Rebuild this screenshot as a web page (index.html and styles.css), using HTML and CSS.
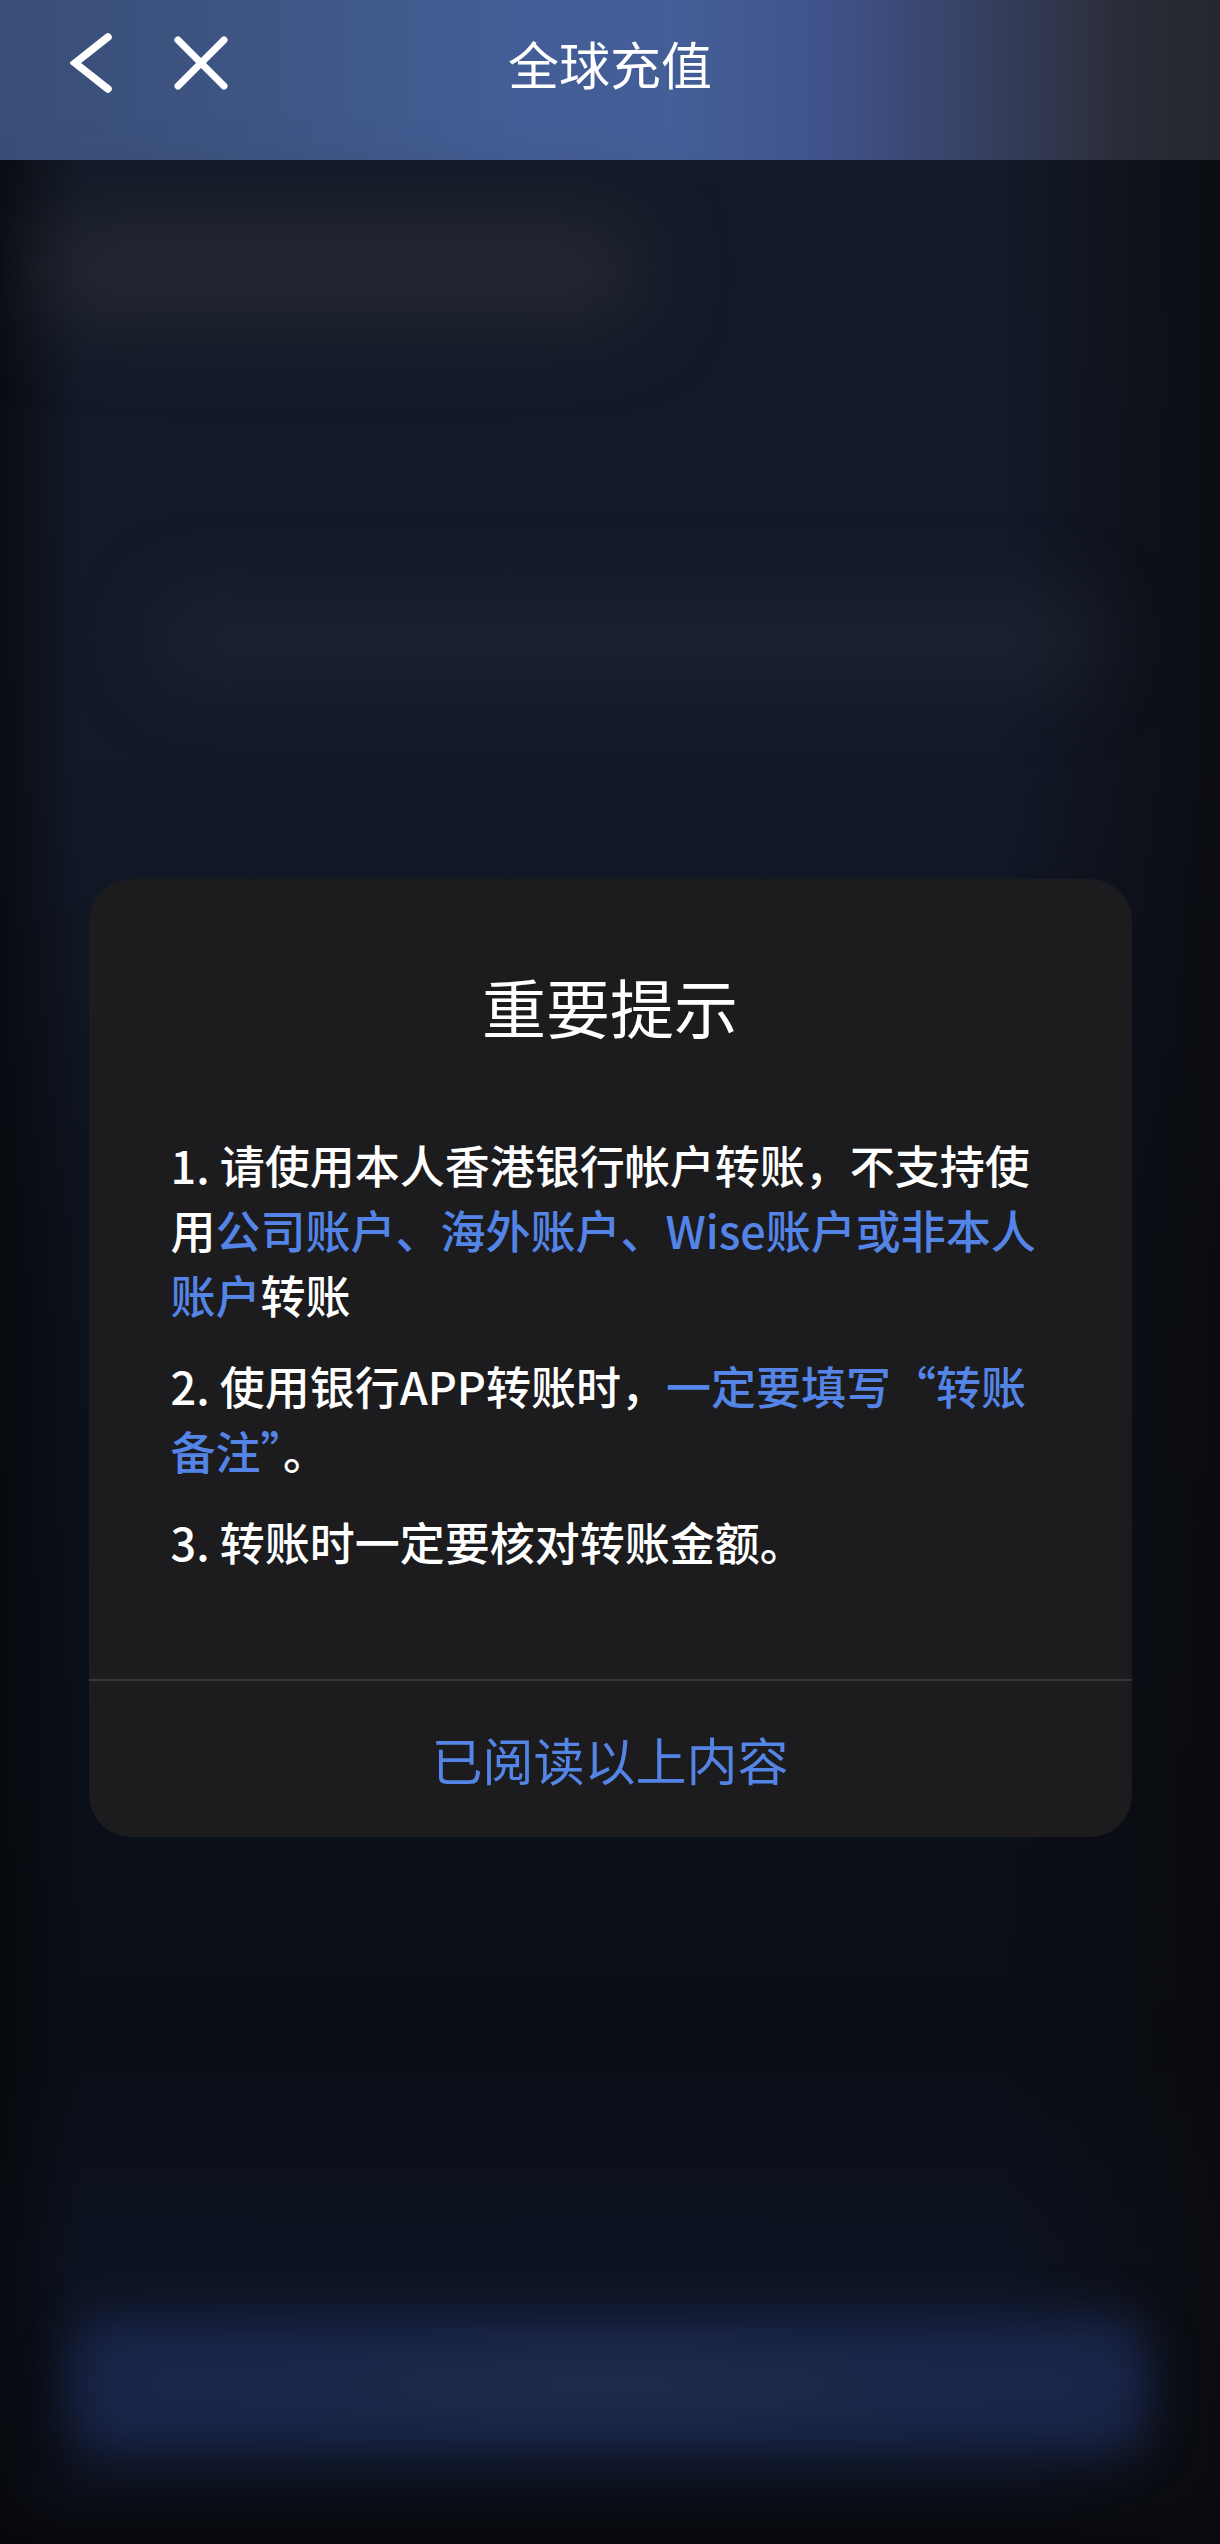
FILE: index.html
```html
<!DOCTYPE html>
<html lang="zh-CN">
<head>
  <meta charset="UTF-8">
  <title>全球充值</title>
  <link rel="stylesheet" href="styles.css">
</head>
<body>
  <div class="screen">
    <header class="topbar">
      <div class="topbar-left">
        <svg class="icon-back" width="44" height="64" viewBox="0 0 44 64">
          <polyline points="38,6 5,32 38,58" fill="none" stroke="#fff" stroke-width="7.5" stroke-linecap="round" stroke-linejoin="miter"/>
        </svg>
        <svg class="icon-close" width="56" height="56" viewBox="0 0 56 56">
          <path d="M5 5 L51 51 M51 5 L5 51" stroke="#fff" stroke-width="7" stroke-linecap="round"/>
        </svg>
      </div>
      <div class="topbar-title">全球充值</div>
      <div></div>
    </header>

    <main class="backdrop">
      <!-- contenu flouté derrière la modale -->
      <div class="ghost ghost-top"></div>
      <div class="ghost ghost-mid"></div>

      <!-- Modale -->
      <div class="notice">
        <div class="notice-body">
          <h2 class="notice-title">重要提示</h2>
          <p class="notice-item">1. 请使用本人香港银行帐户转账，不支持使用<span class="hl">公司账户、海外账户、Wise账户或非本人账户</span>转账</p>
          <p class="notice-item">2. 使用银行APP转账时，<span class="hl">一定要填写“转账备注”</span>。</p>
          <p class="notice-item">3. 转账时一定要核对转账金额。</p>
        </div>
        <div class="notice-action">已阅读以上内容</div>
      </div>

      <div class="ghost ghost-bottom"></div>
    </main>
  </div>
</body>
</html>
```

FILE: styles.css
```css
html, body {
  margin: 0;
  padding: 0;
}
body {
  font-family: "Noto Sans CJK SC", "Noto Sans", sans-serif;
  background: #0a0e17;
  color: #fff;
}
.screen {
  width: 1220px;
  min-height: 2544px;
  display: flex;
  flex-direction: column;
  overflow: hidden;
}

/* Barre du haut */
.topbar {
  height: 160px;
  box-sizing: border-box;
  padding: 0 0 34px 0;
  display: grid;
  grid-template-columns: 1fr auto 1fr;
  align-items: center;
  background: linear-gradient(90deg, #394e77 0%, #3e5685 22%, #435e96 42%, #445e97 55%, #3f5389 68%, #353d5c 82%, #2a2d38 92%, #25272d 100%);
}
.topbar-left {
  display: flex;
  align-items: center;
  padding-left: 70px;
  gap: 59px;
}
.icon-back, .icon-close {
  display: block;
}
.topbar-title {
  font-size: 51px;
  line-height: 74px;
  color: #fff;
}

/* Fond flou */
.backdrop {
  flex: 1;
  display: flex;
  flex-direction: column;
  background:
    linear-gradient(90deg, rgba(6, 7, 9, 0.7) 0, rgba(6, 7, 9, 0) 80px, rgba(6, 7, 9, 0) 1000px, rgba(10, 11, 14, 0.85) 1220px),
    linear-gradient(180deg, #131a28 0, #121929 600px, #0c111b 1100px, #0a0e17 1900px, #0d1322 2120px, #0c101b 2330px, #07080b 2384px);
}
.ghost {
  flex: none;
  filter: blur(34px);
  border-radius: 40px;
}
.ghost-top {
  margin: 60px 0 0 40px;
  width: 600px;
  height: 100px;
  background: #262932;
  filter: blur(42px);
}
.ghost-mid {
  margin: 270px 0 0 150px;
  width: 950px;
  height: 100px;
  background: rgba(34, 38, 52, 0.6);
}
.ghost-bottom {
  margin: 478px 0 0 72px;
  width: 1076px;
  height: 140px;
  background: radial-gradient(ellipse at center, #232d4a 0%, #1a2649 40%, #182448 100%);
  filter: blur(22px);
}

/* Modale */
.notice {
  flex: none;
  width: 1043px;
  margin: 189px auto 0;
  background: #1c1c1e;
  border-radius: 42px;
  overflow: hidden;
}
.notice-body {
  padding: 86px 82px 105px;
}
.notice-title {
  margin: 0 0 87px;
  text-align: center;
  font-size: 64px;
  line-height: 80px;
  font-weight: 400;
}
.notice-item {
  margin: 0 0 26px;
  font-size: 45px;
  line-height: 65px;
  font-weight: 500;
}
.notice-item:last-child {
  margin-bottom: 0;
}
.hl {
  color: #5384e6;
}
.notice-action {
  border-top: 2px solid #38383b;
  height: 156px;
  display: flex;
  align-items: center;
  justify-content: center;
  font-size: 51px;
  color: #5384e6;
}
```
